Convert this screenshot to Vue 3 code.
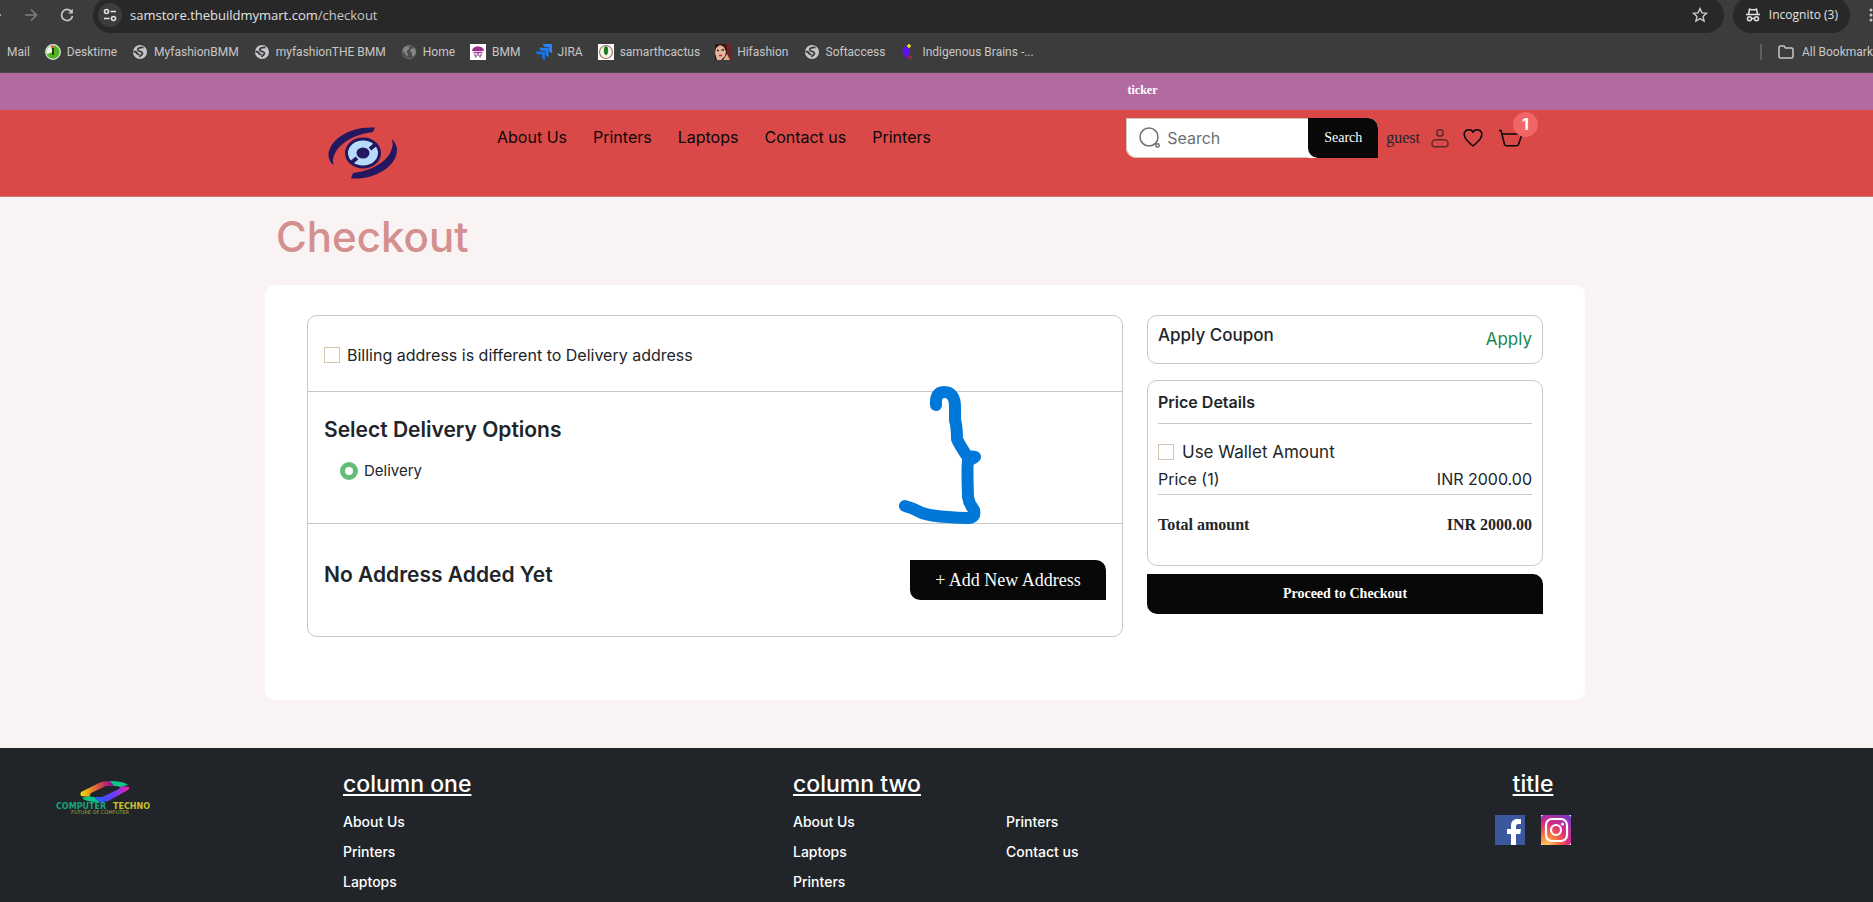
<script setup>
import { ref } from 'vue'

const bookmarks = [
  { label: 'Desktime', icon: 'desktime' },
  { label: 'MyfashionBMM', icon: 'globe' },
  { label: 'myfashionTHE BMM', icon: 'globe' },
  { label: 'Home', icon: 'earth' },
  { label: 'BMM', icon: 'bmm' },
  { label: 'JIRA', icon: 'jira' },
  { label: 'samarthcactus', icon: 'cactus' },
  { label: 'Hifashion', icon: 'face' },
  { label: 'Softaccess', icon: 'globe' },
  { label: 'Indigenous Brains -...', icon: 'brain' },
]
const nav = ['About Us', 'Printers', 'Laptops', 'Contact us', 'Printers']
const columnOne = ['About Us', 'Printers', 'Laptops']
const columnTwo = ['About Us', 'Printers', 'Laptops', 'Contact us', 'Printers']

const address = ref('samstore.thebuildmymart.com')
const query = ref('')
const differentBilling = ref(false)
const useWallet = ref(false)
const delivery = ref('delivery')
</script>

<template>
  <div class="page">
    <div class="browser">
      <div class="toolbar">
        <button class="tool" aria-label="Back">
          <svg width="16" height="16" viewBox="0 0 16 16"><path d="M14 8H2M8 2L2 8l6 6" fill="none" stroke="#c7c7c7" stroke-width="1.6" /></svg>
        </button>
        <button class="tool forward" aria-label="Forward">
          <svg width="16" height="16" viewBox="0 0 16 16"><path d="M2 8h11M8 2.5L13.500 8 8 13.500" fill="none" stroke="#7d7d7d" stroke-width="1.6" /></svg>
        </button>
        <button class="tool reload" aria-label="Reload">
          <svg width="16" height="16" viewBox="0 0 16 16"><path d="M13 5.500A5.500 5.500 0 1 0 13.500 9" fill="none" stroke="#c7c7c7" stroke-width="1.7" /><path d="M13.800 1.800v4.700H9.200z" fill="#c7c7c7" /></svg>
        </button>
        <div class="omnibox">
          <button class="site-info" aria-label="View site information">
            <svg width="14" height="14" viewBox="0 0 14 14" fill="none" stroke="#e3e3e3" stroke-width="1.6"><circle cx="3.500" cy="3.500" r="2" /><path d="M7.500 3.500H13M1 10.500h5.500" /><circle cx="10.500" cy="10.500" r="2" /></svg>
          </button>
          <a class="url" href="#">{{ address }}<span>/checkout</span></a>
          <button class="tool star" aria-label="Bookmark this tab">
            <svg width="16" height="16" viewBox="0 0 16 16"><path d="M8 1.500l1.900 4.400 4.700.4-3.600 3.100 1.100 4.700L8 11.600l-4.100 2.500L5 9.400 1.400 6.300l4.700-.4z" fill="none" stroke="#c7c7c7" stroke-width="1.4" /></svg>
          </button>
        </div>
        <button class="incognito">
          <svg width="16" height="16" viewBox="0 0 16 16"><path d="M1 7.500h14M3.500 7.200l1-5 2 .6h3l2-.6 1 5" fill="none" stroke="#e3e3e3" stroke-width="1.6" /><g fill="none" stroke="#e3e3e3" stroke-width="1.5"><circle cx="4.500" cy="11.800" r="2" /><circle cx="11.500" cy="11.800" r="2" /><path d="M6.500 11.500h3" /></g></svg>
          Incognito (3)
        </button>
        <button class="tool kebab" aria-label="Menu">
          <svg width="4" height="16" viewBox="0 0 4 16" fill="#c7c7c7"><circle cx="2" cy="3" r="1.500" /><circle cx="2" cy="8" r="1.500" /><circle cx="2" cy="13" r="1.500" /></svg>
        </button>
      </div>
      <div class="bookmarks">
        <a class="bookmark" href="#">Mail</a>
        <a v-for="b in bookmarks" :key="b.label" class="bookmark" href="#">
          <svg v-if="b.icon === 'desktime'" width="16" height="16" viewBox="0 0 16 16"><circle cx="8" cy="8" r="7.300" fill="#52b51f" stroke="#e8e8e8" stroke-width="1.200" /><path d="M8 8V1.500A6.500 6.500 0 0 0 2 10z" fill="#f3f3e8" /><path d="M8 8L5.500 1.900A6.500 6.500 0 0 1 8 1.500z" fill="#f0562c" /><path d="M8 4v7" stroke="#1f3d12" stroke-width="2" /></svg>
          <svg v-else-if="b.icon === 'globe'" width="16" height="16" viewBox="0 0 16 16"><circle cx="8" cy="8" r="7" fill="#c4c7cc" /><path d="M11.500 3.500C8 3.200 5.500 4 5.700 6c.2 1.700 4.800 1.300 4.800 3.300 0 1.500-2 1.700-2.800 3.700M1.500 7.500c2 0 3.200.6 3.500 2 .2 1 1.500 1 2.500 1" fill="none" stroke="#3c3c3c" stroke-width="1.800" /></svg>
          <svg v-else-if="b.icon === 'earth'" width="16" height="16" viewBox="0 0 16 16"><circle cx="8" cy="8" r="6.800" fill="#4e4e4e" stroke="#696969" /><path d="M3 3.500L7.500 2l1 2-2 2.500-1.500.5 2 3-1 3-2-3.500-2-2.500zM10 5l4-1 .8 4-1.800 4.500-2-1-.2-3L9 7z" fill="#888" /></svg>
          <svg v-else-if="b.icon === 'bmm'" width="16" height="16" viewBox="0 0 16 16"><path fill="#fff" d="M0 0h16v16H0z" /><path d="M2 7c0-6 12-6 12 0z" fill="#b0389a" /><path d="M5 3v4M8 2.500V7M11 3v4" stroke="#7b1e72" /><path d="M3.500 8.500h9M4 10.500l2 1M12 10.500l-2 1M5.500 13.500l1-2M10.500 13.500l-1-2M8 8v4" stroke="#a33b9b" stroke-width="1.300" fill="none" /></svg>
          <svg v-else-if="b.icon === 'jira'" width="16" height="16" viewBox="0 0 16 16"><path d="M7 0h9v9c-2 0-3-1.500-3-3V3h-3C8.500 3 7 2 7 0z" fill="#2684ff" /><path d="M3.500 3.700h9v9c-2 0-3-1.500-3-3v-3h-3c-1.700 0-3-1-3-3z" fill="#207cf2" /><path d="M0 7.400h9v8.600c-2 0-3-1.500-3-3v-2.600H3c-1.700 0-3-1-3-3z" fill="#1a6fe0" /></svg>
          <svg v-else-if="b.icon === 'cactus'" width="16" height="16" viewBox="0 0 16 16"><path fill="#fff" d="M0 0h16v16H0z" /><circle cx="8" cy="8" r="6.500" fill="#f5f5ee" stroke="#a67b62" stroke-width="1.200" /><ellipse cx="8" cy="6.500" rx="2.200" ry="4.200" fill="#1f8a24" /><path d="M8 3v8" stroke="#0f5c18" /></svg>
          <svg v-else-if="b.icon === 'face'" width="16" height="16" viewBox="0 0 16 16"><path fill="#2a1717" d="M0 0h16v16H0z" /><path d="M1 4l4-3 4 2 2 5-1 4-4 4H2L0 9z" fill="#e5b59b" /><path d="M11 0h5v16h-5l1-7z" fill="#6e2222" /><path d="M2 6.500h2M6.500 6h2.500" stroke="#3b1815" stroke-width="1.400" /><path d="M4 11.500h3" stroke="#c2233f" stroke-width="1.600" /><path d="M12 10l-4 6h7z" fill="#e0a88e" /></svg>
          <svg v-else width="16" height="16" viewBox="0 0 16 16"><path d="M7 2c-4 1-6 5-4 7l1 1 1 4h4V9l1-3z" fill="#5b12f2" /><path d="M9 0v4M7 2h4" stroke="#f3e51c" stroke-width="1.600" /><path d="M8 11l3 1 2 3H9z" fill="#a12a2a" /></svg>
          {{ b.label }}
        </a>
        <a class="bookmark all" href="#">
          <svg width="16" height="14" viewBox="0 0 16 14"><path d="M1 2.500q0-1.500 1.500-1.500H6l1.500 2h6q1.500 0 1.500 1.500v7q0 1.500-1.500 1.500h-11Q1 13 1 11.500z" fill="none" stroke="#c7c7c7" stroke-width="1.500" /></svg>
          All Bookmark
        </a>
      </div>
    </div>

    <div class="ticker">ticker</div>

    <header class="header">
      <div class="container header-inner">
        <a class="logo" href="#" aria-label="Store home">
          <svg width="72" height="52" viewBox="0 0 72 52">
            <path d="M48 .5C22-1 2 13 1.500 28c0 4 2 8 5 10C3 25 19 8 46 5z" fill="#23175f" />
            <path d="M24 51.500C50 53 70 38 70 23c0-4-2-8-5-11 4 14-11 31-39 34z" fill="#23175f" />
            <ellipse cx="36" cy="26" rx="16.500" ry="14" fill="#b7dcfb" stroke="#23175f" stroke-width="3" />
            <ellipse cx="36" cy="26" rx="6.500" ry="5.500" fill="#23175f" />
            <path d="M43 22l6-5M24 36l6-5" stroke="#23175f" stroke-width="4" />
          </svg>
        </a>
        <nav class="nav" aria-label="Main">
          <a v-for="(n, i) in nav" :key="i" href="#">{{ n }}</a>
        </nav>
        <form class="search" role="search" @submit.prevent>
          <label class="search-box">
            <svg width="22" height="22" viewBox="0 0 22 22" fill="none" stroke="#6f6f6f" stroke-width="1.500"><circle cx="10" cy="10" r="9" /><circle cx="18.500" cy="18.500" r="1.700" /></svg>
            <input v-model="query" type="text" placeholder="Search" aria-label="Search" />
          </label>
          <button class="dark search-button">Search</button>
        </form>
        <div class="user">
          <a href="#" class="guest">guest</a>
          <a href="#" aria-label="Account"><svg width="18" height="19" viewBox="0 0 18 19" fill="none" stroke="#5a2b2b" stroke-width="1.500"><circle cx="9" cy="4" r="3.200" /><path d="M4.500 10.800h9c2 0 3.500 2 3.500 4 0 2-1 3-2.500 3h-11C2 17.800 1 16.800 1 14.800c0-2 1.500-4 3.500-4z" /></svg></a>
          <a href="#" aria-label="Wishlist"><svg width="20" height="18" viewBox="0 0 20 18" fill="none" stroke="#080808" stroke-width="1.500"><path d="M10 3C8-.2 3-.2 1.500 3.500c-1.800 5 4 9.500 8.500 13.500 4.500-4 10.300-8.500 8.500-13.500C17-.2 12-.2 10 3z" /></svg></a>
          <a href="#" class="cart" aria-label="Cart">
            <svg width="24" height="18" viewBox="0 0 24 18" fill="none" stroke="#080808" stroke-width="1.600"><path d="M0 1.500h2l3.500 14q.5 1.200 2 1.200h10q1.500 0 2-1.200L23 5H3" /></svg>
            <span class="badge">1</span>
          </a>
        </div>
      </div>
    </header>

    <main class="main">
      <h1>Checkout</h1>
      <div class="card">
        <section class="details">
          <div class="row billing">
            <label class="option"><input v-model="differentBilling" type="checkbox" />Billing address is different to Delivery address</label>
          </div>
          <div class="row delivery">
            <h2>Select Delivery Options</h2>
            <label class="option radio"><input v-model="delivery" type="radio" name="delivery" value="delivery" />Delivery</label>
          </div>
          <div class="row address">
            <h2>No Address Added Yet</h2>
            <button class="dark add">+ Add New Address</button>
          </div>
        </section>
        <aside class="summary">
          <div class="panel coupon">
            <h3>Apply Coupon</h3>
            <button class="apply">Apply</button>
          </div>
          <div class="panel price">
            <h3 class="strong">Price Details</h3>
            <label class="option wallet"><input v-model="useWallet" type="checkbox" />Use Wallet Amount</label>
            <div class="line"><span>Price (1)</span><span>INR 2000.00</span></div>
            <div class="line total"><span>Total amount</span><span>INR 2000.00</span></div>
          </div>
          <button class="dark proceed">Proceed to Checkout</button>
        </aside>
        <svg class="scribble" width="84" height="140" viewBox="0 0 84 140" fill="none" stroke="#0078d9" stroke-width="12" stroke-linecap="round" stroke-linejoin="round" aria-hidden="true">
          <path d="M37 20Q36 7 45 7Q56 7 56 22V35Q58 42 58 54Q60 59 68 71L76 72L69 76Q68 81 69 112Q70 119 75 125Q77 133 69 133Q58 133 49 132Q32 131 23 128Q14 123 6 121" />
        </svg>
      </div>
    </main>

    <footer class="footer">
      <a class="footer-logo" href="#" aria-label="Computer Techno">
        <svg width="96" height="33" viewBox="0 0 96 33">
          <defs>
            <linearGradient id="gold"><stop offset="0" stop-color="#f5e400" /><stop offset=".5" stop-color="#d65b3c" /><stop offset="1" stop-color="#92009c" /></linearGradient>
            <linearGradient id="violet"><stop offset="0" stop-color="#1266ff" /><stop offset=".6" stop-color="#7338ff" /><stop offset="1" stop-color="#ff209d" /></linearGradient>
          </defs>
          <path d="M25 11L43 2Q47 0 54 0l4 5-8 0-15 7-2 4-8-1q-1-2 0-4z" fill="url(#gold)" />
          <path d="M72 9L54 19Q50 21 43 21l-5-5 8 0 17-8 2-3 8 1q1 2-1 3z" fill="url(#violet)" />
          <path d="M54 0q14 0 18 4l-8 2q-2-1-6-1zM43 21q-14 0-17-4l7-2q2 1 5 1z" fill="#0fc488" />
          <text x="0" y="28" font-size="8" font-weight="700" fill="#16a579">COMPUTER</text>
          <text x="57" y="28" font-size="8" font-weight="700" fill="#c9c12c">TECHNO</text>
          <text x="15" y="33" font-size="5" fill="#a7a138">FUTURE OF COMPUTER</text>
        </svg>
      </a>
      <section>
        <h4>column one</h4>
        <ul class="links"><li v-for="l in columnOne" :key="l"><a href="#">{{ l }}</a></li></ul>
      </section>
      <section>
        <h4>column two</h4>
        <ul class="links split"><li v-for="(l, i) in columnTwo" :key="i"><a href="#">{{ l }}</a></li></ul>
      </section>
      <section class="social">
        <h4>title</h4>
        <div class="icons">
          <a href="#" aria-label="Facebook"><svg width="30" height="30" viewBox="0 0 30 30"><path fill="#3b579d" d="M0 0h30v30H0z" /><path d="M16 30V19h-4v-5h4v-3c0-5 3-7 6-7h4v5h-2.500c-2 0-2.500 1-2.500 2.500V14h5l-.7 5H21v11z" fill="#fff" /></svg></a>
          <a href="#" aria-label="Instagram"><svg width="30" height="30" viewBox="0 0 30 30"><defs><radialGradient id="insta" cx=".2" cy="1" r="1.200"><stop offset="0" stop-color="#ffd166" /><stop offset=".3" stop-color="#f9713c" /><stop offset=".6" stop-color="#d92b80" /><stop offset="1" stop-color="#7638c9" /></radialGradient></defs><path fill="#fff" d="M0 0h30v30H0z" /><rect width="30" height="30" rx="3" fill="url(#insta)" /><g fill="none" stroke="#fff" stroke-width="2.200"><rect x="5" y="4" width="21" height="22" rx="6" /><circle cx="15" cy="15" r="5" /></g><circle cx="21.500" cy="9" r="1.500" fill="#fff" /></svg></a>
        </div>
      </section>
    </footer>
  </div>
</template>

<style>
body {
  margin: 0;
}
</style>

<style scoped>
.page {
  --sans: Inter, "Open Sans", sans-serif;
  --serif: "Liberation Serif", serif;
  --line: #c8c8c8;
  display: flex;
  flex-direction: column;
  height: 100vh;
  overflow: hidden;
  background: #f9f3f3;
  color: #212529;
  font: 16px/24px var(--sans);
}
.page * {
  box-sizing: border-box;
}
a {
  color: inherit;
  text-decoration: none;
}
button {
  border: 0;
  padding: 0;
  background: none;
  color: inherit;
  font: inherit;
}
svg {
  display: block;
  flex: none;
}
h1, h2, h3, h4, ul {
  margin: 0;
  padding: 0;
  font-weight: 500;
}
.container {
  width: calc(100% - 48px);
  max-width: 1320px;
}

/* browser chrome */
.browser {
  flex: none;
  background: #3c3c3c;
  color: #c7c7c7;
  font: 12px/16px "Open Sans", "Noto Sans", sans-serif;
  border-bottom: 1px solid #4a4a4a;
  overflow: hidden;
}
.toolbar {
  display: flex;
  align-items: center;
  height: 32px;
  padding-bottom: 2px;
}
.tool {
  flex: none;
  width: 16px;
  margin-left: -13px;
}
.tool.forward {
  margin-left: 20px;
}
.tool.reload {
  margin-left: 20px;
}
.omnibox {
  flex: 1;
  display: flex;
  align-items: center;
  height: 36px;
  margin: 0 9px 0 18px;
  padding: 0 16px 0 5px;
  border-radius: 18px;
  background: #282828;
}
.site-info {
  display: grid;
  place-items: center;
  width: 24px;
  height: 24px;
  border-radius: 12px;
  background: #3c3c3c;
}
.url {
  margin-left: 8px;
  color: #e3e3e3;
  font-size: 13px;
}
.url span {
  color: #c7c7c7;
}
.tool.star {
  margin-left: auto;
}
.incognito {
  display: flex;
  align-items: center;
  gap: 8px;
  height: 36px;
  padding: 0 12px;
  border-radius: 18px;
  background: #282828;
  color: #e3e3e3;
}
.tool.kebab {
  width: 4px;
  margin-left: 19px;
}
.bookmarks {
  display: flex;
  align-items: center;
  gap: 15px;
  height: 40px;
  padding-left: 7px;
  white-space: nowrap;
  font-family: Roboto, "Open Sans", sans-serif;
}
.bookmark {
  display: flex;
  align-items: center;
  gap: 6px;
}
.bookmark.all {
  gap: 8px;
  margin-left: auto;
  padding-left: 16px;
  border-left: 2px solid #606060;
}

/* store header */
.ticker {
  flex: none;
  padding-left: 60.2%;
  background: #b36aa1;
  color: #fff;
  font: bold 12px/34px var(--serif);
  height: 37px;
}
.header {
  flex: none;
  padding-right: 23px;
  background: #db4848;
  border-bottom: 1px solid #c97b7b;
}
.header-inner {
  display: flex;
  align-items: flex-start;
  height: 86px;
  margin: 0 auto;
  padding: 8px 62px;
}
.logo {
  margin: 9px 98px 0 0;
}
.nav {
  display: flex;
  gap: 26px;
  margin-top: 7px;
  color: #080808;
}
.search {
  display: flex;
  height: 40px;
  margin-left: auto;
  border-radius: 0 10px 0 10px;
  background: #fff;
}
.search-box {
  display: flex;
  align-items: center;
  gap: 6px;
  width: 182px;
  padding-left: 12px;
  border: 1px solid #cfc3b4;
  border-right: 0;
  border-radius: 0 0 0 10px;
}
.search-box input {
  flex: 1;
  width: 0;
  height: 38px;
  padding: 0;
  border: 0;
  outline: 0;
  background: #fff;
  font: 16px/24px var(--sans);
}
.search-box input::placeholder {
  color: #6c6f73;
  opacity: 1;
}
.dark {
  height: 40px;
  border-radius: 0 10px 0 10px;
  background: #080808;
  color: #fff;
  font-family: var(--serif);
}
.search-button {
  width: 70px;
  font-size: 14px;
}
.user {
  display: flex;
  align-items: center;
  gap: 14px;
  height: 40px;
  margin-left: 8px;
}
.guest {
  margin-right: -3px;
  font-family: var(--serif);
}
.cart {
  position: relative;
  margin-left: 2px;
}
.badge {
  position: absolute;
  left: 14px;
  bottom: 10px;
  width: 25px;
  height: 25px;
  border-radius: 50%;
  background: #f06565;
  color: #fff;
  font-weight: 700;
  text-align: center;
}

/* checkout */
.main {
  flex: none;
  width: calc(100% - 71px);
  max-width: 1320px;
  margin: 0 auto 48px max(24px, calc((100% - 1343px) / 2));
}
h1 {
  padding: 16px 11px 24px;
  color: #d48f8f;
  font-size: 42px;
  line-height: 48px;
}
.card {
  position: relative;
  display: flex;
  gap: 24px;
  min-height: 415px;
  padding: 30px 42px;
  border-radius: 10px;
  background: #fff;
}
.details {
  flex: 1;
  align-self: flex-start;
  border: 1px solid var(--line);
  border-radius: 10px;
}
.row {
  padding: 0 16px;
}
.row + .row {
  border-top: 1px solid var(--line);
}
.billing {
  padding-top: 27px;
  padding-bottom: 24px;
}
.delivery {
  height: 132px;
  padding-top: 23px;
  font-size: 15px;
}
.address {
  display: flex;
  justify-content: space-between;
  align-items: flex-start;
  height: 113px;
  padding-top: 36px;
}
h2 {
  font-size: 21px;
  line-height: 30px;
  font-weight: 600;
}
.option {
  display: flex;
  align-items: center;
  gap: 7px;
}
.option input {
  appearance: none;
  width: 16px;
  height: 16px;
  margin: 0;
  border: 1px solid #d3c5b0;
  background: #fff;
}
.option.radio {
  gap: 6px;
  margin: 0 0 0 16px;
  padding-top: 14px;
}
.option.radio input {
  width: 18px;
  height: 18px;
  border: 5px solid #62bd77;
  border-radius: 50%;
}
.dark.add {
  width: 196px;
  font-size: 18px;
}
.summary {
  width: 396px;
}
.panel {
  border: 1px solid var(--line);
  border-radius: 10px;
  padding: 0 10px;
}
.coupon {
  display: flex;
  justify-content: space-between;
  height: 49px;
  padding-top: 7px;
}
h3 {
  font-size: 17px;
  line-height: 24px;
}
h3.strong {
  padding-bottom: 9px;
  border-bottom: 1px solid var(--line);
  font-size: 16px;
  font-weight: 600;
}
.apply {
  align-self: flex-start;
  padding-top: 4px;
  color: #198754;
  font-size: 17px;
}
.price {
  height: 186px;
  margin: 16px 0 8px;
  padding-top: 9px;
}
.wallet {
  gap: 8px;
  padding: 16px 0 3px;
  font-size: 17px;
}
.line {
  display: flex;
  justify-content: space-between;
  padding-bottom: 3px;
  border-bottom: 1px solid var(--line);
}
.line.total {
  padding-top: 18px;
  border: 0;
  font: bold 16px/24px var(--serif);
}
.proceed {
  width: 100%;
  font-size: 14px;
  font-weight: 700;
}
.scribble {
  position: absolute;
  left: 634px;
  top: 100px;
}

/* footer */
.footer {
  flex: 1 0 auto;
  display: grid;
  grid-template-columns: 287px 450px 1fr 76px;
  padding: 20px 302px 0 56px;
  background: #212529;
  color: #fff;
}
.footer-logo {
  padding-top: 13px;
  font-family: "DejaVu Sans", sans-serif;
}
h4 {
  font-size: 23px;
  line-height: 32px;
  text-decoration: underline;
}
.links {
  display: grid;
  padding-top: 7px;
  font-size: 14px;
  line-height: 30px;
  list-style: none;
}
.links.split {
  grid-template-columns: 213px 1fr;
}
.social {
  text-align: center;
}
.icons {
  display: flex;
  justify-content: space-between;
  padding-top: 15px;
}
</style>
